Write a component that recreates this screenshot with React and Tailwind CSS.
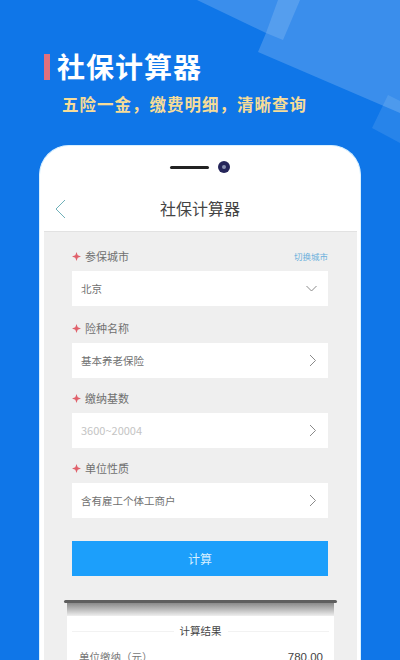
import React from "react";

const cjk = { fontFamily: '"Noto Sans CJK SC", "Noto Sans", sans-serif' };

function Star() {
  return (
    <svg width="9" height="9" viewBox="0 0 9 9" className="shrink-0">
      <path d="M4.5 0 L5.7 3.3 L9 4.5 L5.7 5.7 L4.5 9 L3.3 5.7 L0 4.5 L3.3 3.3 Z" fill="#e0606a" />
    </svg>
  );
}

function Right() {
  return (
    <svg width="8" height="13" viewBox="0 0 8 13" fill="none" stroke="#8a8a8a" strokeWidth="1">
      <path d="M1 1 L6.5 6.5 L1 12" />
    </svg>
  );
}

function Down() {
  return (
    <svg width="11" height="7" viewBox="0 0 11 7" fill="none" stroke="#8a8a8a" strokeWidth="1">
      <path d="M0.5 1 L5.5 6 L10.5 1" />
    </svg>
  );
}

function Field({ label, value, extra, icon, muted, mb }) {
  return (
    <div className={mb}>
      <div className="flex items-center justify-between h-[16px] mb-[7px]">
        <div className="flex items-center gap-[4px] text-[11px] text-[#707070]">
          <Star />
          <span>{label}</span>
        </div>
        {extra && <span className="text-[8.5px] text-[#6cb0dc]">{extra}</span>}
      </div>
      <div className="h-[35px] bg-white flex items-center justify-between pl-[9px] pr-[11px]">
        <span className={muted ? "text-[11px] text-[#c4c4c4]" : "text-[10.5px] text-[#707070]"}>{value}</span>
        {icon}
      </div>
    </div>
  );
}

export default function App() {
  return (
    <div className="relative w-[400px] h-[660px] overflow-hidden bg-[#0f76e8]" style={cjk}>
      <svg className="absolute left-0 top-0" width="400" height="150" viewBox="0 0 400 150">
        <polygon points="388,95 400,101 400,143 372,128" fill="#ffffff" fillOpacity="0.1" />
        <polygon points="197,0 400,0 400,113 258,52 266,33" fill="#ffffff" fillOpacity="0.18" />
        <polygon points="278,0 300,0 283,40 266,33" fill="#ffffff" fillOpacity="0.14" />
      </svg>

      <div className="relative h-[145px] pl-[44px]">
        <div className="flex items-center pt-[54px] h-[80px]">
          <div className="w-[6px] h-[26px] bg-[#e2707c] mr-[7px]" />
          <span className="text-[28px] leading-[24px] mb-[2px] font-bold text-white tracking-[1px]">社保计算器</span>
        </div>
        <div className="pl-[18px] pt-[13px] text-[16.5px] leading-[22px] font-bold text-[#f6dc98] tracking-[1px]">
          五险一金，缴费明细，清晰查询
        </div>
      </div>

      <div className="relative mx-[39px] h-[515px] bg-white rounded-t-[30px] border-x-[1px] border-t-[1px] border-[#d8f0ff] overflow-hidden">
        <div className="h-[41px] flex items-center justify-center gap-[9px] pt-[1px]">
          <div className="w-[39px] h-[3px] rounded-full bg-[#222]" />
          <div className="w-[12px] h-[12px] rounded-full bg-[#25255a] flex items-center justify-center">
            <div className="w-[4px] h-[4px] rounded-full bg-[#8890b0]" />
          </div>
        </div>
        <div className="relative h-[44px] pb-[2px] flex items-center justify-center text-[16px] text-[#444]">
          <svg className="absolute left-[15px] top-[12px]" width="11" height="20" viewBox="0 0 11 20" fill="none" stroke="#6fb0b8" strokeWidth="1">
            <path d="M10 1 L1 10 L10 19" />
          </svg>
          社保计算器
        </div>
        <div className="ml-[4px] mr-[3px] h-[430px] bg-[#efefef] border-t border-[#e2e2e2] pl-[28px] pr-[29px] pt-[16px]">
          <Field label="参保城市" value="北京" extra="切换城市" icon={<Down />} mb="mb-[14px]" />
          <Field label="险种名称" value="基本养老保险" icon={<Right />} mb="mb-[12px]" />
          <Field label="缴纳基数" value="3600~20004" muted icon={<Right />} mb="mb-[12px]" />
          <Field label="单位性质" value="含有雇工个体工商户" icon={<Right />} mb="mb-[23px]" />
          <div className="h-[35px] bg-[#1c9ffb] flex items-center justify-center text-[12px] text-[#d8f0ff]">计算</div>
          <div className="relative -ml-[8px] -mr-[9px] mt-[24px]">
            <div className="h-[3px] rounded-full bg-[#5e5e5e]" />
            <div className="mx-[3px] bg-white">
              <div className="h-[13px] bg-gradient-to-b from-[#8a8a8a] to-[#efefef]" />
              <div className="relative h-[28px] flex items-center justify-center">
                <div className="absolute left-[5px] right-[5px] top-[15px] h-px bg-[#f2f2f2]" />
                <span className="relative bg-white px-[6px] text-[10.5px] text-[#444] top-[1px]">计算结果</span>
              </div>
              <div className="flex justify-between pl-[12px] pr-[11px] pt-[5px] text-[10.5px] leading-[16px] text-[#777]">
                <span>单位缴纳（元）</span>
                <span className="text-[11.5px] text-[#444]" style={{ fontFamily: '"Liberation Sans", sans-serif' }}>780.00</span>
              </div>
            </div>
          </div>
        </div>
      </div>
    </div>
  );
}
